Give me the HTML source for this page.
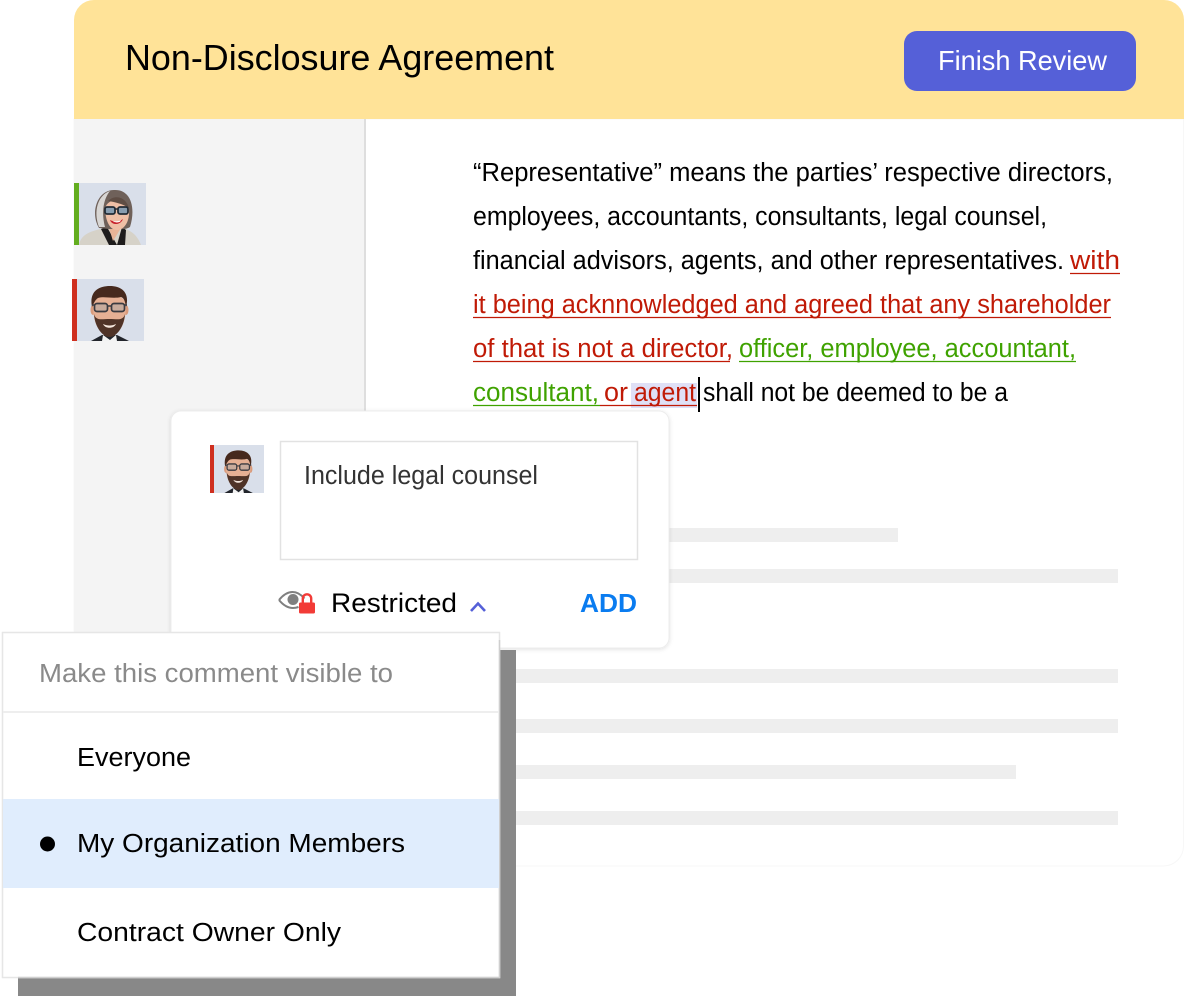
<!DOCTYPE html>
<html lang="en">
<head>
<meta charset="utf-8">
<title>Non-Disclosure Agreement</title>
<style>
html,body{margin:0;padding:0;width:1184px;height:997px;overflow:hidden;background:#fff}
svg{display:block}
text{font-family:"Liberation Sans",sans-serif;font-size:25.5px;fill:#000;white-space:pre}
</style>
</head>
<body>
<svg width="1184" height="997" viewBox="0 0 1184 997" xmlns="http://www.w3.org/2000/svg">
<defs>
<clipPath id="woman"><rect x="0" y="0" width="67" height="62"/></clipPath>
<clipPath id="man"><rect x="0" y="0" width="67" height="62"/></clipPath>
<g id="manFace" clip-path="url(#man)">
<rect width="67" height="62" fill="#d9dfea"/>
<path d="M14 62 L25 56 L40 56 L52 62Z" fill="#22252b"/>
<path d="M26 56 L33 61 L39 56 L40 62 L25 62Z" fill="#f2f2f2"/>
<ellipse cx="16" cy="31" rx="2.500" ry="5" fill="#d99b7c"/>
<ellipse cx="49" cy="31" rx="2.500" ry="5" fill="#d99b7c"/>
<path d="M16 26 C16 12 49 12 49 26 C49 46 42 56 32.500 56 C23 56 16 46 16 26Z" fill="#e6b094"/>
<path d="M17 35 C18 49 26 58 32.500 58 C39 58 47 49 48 35 C46 42 41 40 32.500 40 C24 40 19 42 17 35Z" fill="#4f3327"/>
<path d="M26 45 C30 47 35 47 39 45 C37 50 28 50 26 45Z" fill="#f4e6dc"/>
<path d="M15 28 C12 13 21 7 33 7 C45 7 53 14 49 28 C48 22 47 19 44 18 C36 20 27 17 21 19 C18 21 17 24 15 28Z" fill="#46291d"/>
<rect x="17.500" y="24.500" width="13" height="8" rx="2.500" fill="#b9a9a0" fill-opacity=".65" stroke="#3a3a40" stroke-width="1.700"/>
<rect x="34.500" y="24.500" width="13" height="8" rx="2.500" fill="#b9a9a0" fill-opacity=".65" stroke="#3a3a40" stroke-width="1.700"/>
<path d="M30.500 27H34.500M15 26H17.500M47.500 26H50" stroke="#3a3a40" stroke-width="1.500"/>
</g>
<g id="womanFace" clip-path="url(#woman)">
<rect width="67" height="62" fill="#d9dfea"/>
<path d="M0 62 C2 50 14 48 25 45 L44 45 C54 48 59 54 62 62Z" fill="#d6d2c8"/>
<path d="M28 44 L38 62 L30 62 L22 46Z M43 44 L38 62 L46 62 L47 47Z" fill="#1e1c1c"/>
<path d="M30 45 L34 58 L42 45Z" fill="#e8b497"/>
<path d="M20 45 C11 30 18 7 35 7 C52 6 57 25 51 44 C46 47 42 46 42 46 L30 46Z" fill="#6f615a"/>
<path d="M20 44 C14 28 19 12 31 8 C23 18 23 32 26 44Z" fill="#d8d6d4"/>
<path d="M26 27 C26 15 48 12 50 26 C51 39 45 47 38 47 C31 47 27 39 26 27Z" fill="#efbfa6"/>
<path d="M29 18 C36 11 47 14 50 25 C44 21 36 19 29 18Z" fill="#5f4d44"/>
<path d="M31 37 C35 39 40 39 44 36 C42 42 33 43 31 37Z" fill="#c8242d"/>
<path d="M33.500 37.800C36 38.500 39.500 38.400 42 37.300L41 38.800C38.500 39.800 35.500 39.800 33.500 37.800Z" fill="#fff"/>
<rect x="26" y="24" width="10" height="7" rx="2" fill="#5c8fb5" fill-opacity=".7" stroke="#232c36" stroke-width="1.800"/>
<rect x="39" y="24" width="10" height="7" rx="2" fill="#5c8fb5" fill-opacity=".7" stroke="#232c36" stroke-width="1.800"/>
<path d="M36 26H39" stroke="#232c36" stroke-width="1.500"/>
</g>
<filter id="cardShadow" x="-5%" y="-5%" width="110%" height="110%">
<feDropShadow dx="0" dy="1" stdDeviation="2" flood-color="#000" flood-opacity=".12"/>
</filter>
</defs>

<!-- document card -->
<path d="M74 119H1183.500V846A20 20 0 0 1 1163.500 866H74Z" fill="#fff" stroke="#f7f7f7" stroke-width="1"/>
<path d="M74 20A20 20 0 0 1 94 0H1164A20 20 0 0 1 1184 20V119H74Z" fill="#ffe398"/>
<rect x="74" y="119" width="291" height="530" fill="#f4f4f4"/>
<rect x="364" y="119" width="2" height="300" fill="#dedede"/>

<text x="125" y="70" style="font-size:36px" textLength="429" lengthAdjust="spacingAndGlyphs">Non-Disclosure Agreement</text>
<rect x="904" y="31" width="232" height="60" rx="13" fill="#5560d8"/>
<text x="938" y="70" style="font-size:28px;fill:#fff" textLength="169" lengthAdjust="spacingAndGlyphs">Finish Review</text>

<!-- avatars -->
<use href="#womanFace" x="79" y="183"/>
<rect x="74" y="183" width="5" height="62" fill="#63ad1f"/>
<use href="#manFace" x="77" y="279"/>
<rect x="72" y="279" width="5" height="62" fill="#cf2f1f"/>

<!-- document text -->
<text x="473" y="181" textLength="640" lengthAdjust="spacingAndGlyphs">“Representative” means the parties’ respective directors,</text>
<text x="473" y="225" textLength="574" lengthAdjust="spacingAndGlyphs">employees, accountants, consultants, legal counsel,</text>
<text x="473" y="269" textLength="591" lengthAdjust="spacingAndGlyphs">financial advisors, agents, and other representatives.</text>
<text x="1070" y="269" style="fill:#c01a06" textLength="50" lengthAdjust="spacingAndGlyphs">with</text>
<text x="473" y="313" style="fill:#c01a06" textLength="638" lengthAdjust="spacingAndGlyphs">it being acknnowledged and agreed that any shareholder</text>
<text x="473" y="357" style="fill:#c01a06" textLength="260" lengthAdjust="spacingAndGlyphs">of that is not a director,</text>
<text x="739" y="357" style="fill:#3fa200" textLength="337" lengthAdjust="spacingAndGlyphs">officer, employee, accountant,</text>
<text x="473" y="401" style="fill:#3fa200" textLength="126" lengthAdjust="spacingAndGlyphs">consultant,</text>
<rect x="631" y="383" width="66" height="25" fill="#dfe0f6"/>
<text x="604" y="401" style="fill:#c01a06" textLength="24" lengthAdjust="spacingAndGlyphs">or</text>
<text x="634" y="401" style="fill:#c01a06" textLength="62" lengthAdjust="spacingAndGlyphs">agent</text>
<text x="703" y="401" textLength="305" lengthAdjust="spacingAndGlyphs">shall not be deemed to be a</text>
<rect x="698" y="377" width="2" height="35" fill="#000"/>

<path d="M1070 273.500H1120M473 317.500H1111M473 361.500H730" stroke="#c01a06" stroke-width="1.300"/>
<path d="M739 361.500H1076M473 405.500H600" stroke="#3fa200" stroke-width="1.300"/>
<path d="M600 405.500H697" stroke="#c01a06" stroke-width="1.300"/>

<!-- placeholder lines -->
<g fill="#eeeeee">
<rect x="660" y="528" width="238" height="14"/>
<rect x="660" y="569" width="458" height="14"/>
<rect x="510" y="669" width="608" height="14"/>
<rect x="510" y="719" width="608" height="14"/>
<rect x="510" y="765" width="506" height="14"/>
<rect x="510" y="811" width="608" height="14"/>
</g>

<!-- comment card -->
<rect x="171" y="411" width="498" height="237" rx="10" fill="#fff" stroke="#ececec" filter="url(#cardShadow)"/>
<svg x="214" y="445" width="50" height="48" viewBox="0 0 67 62" preserveAspectRatio="none"><use href="#manFace"/></svg>
<rect x="210" y="445" width="4" height="48" fill="#cf2f1f"/>
<rect x="280.500" y="441.500" width="357" height="118" fill="#fff" stroke="#e2e2e2" stroke-width="1.500"/>
<text x="304" y="484" style="fill:#333" textLength="234" lengthAdjust="spacingAndGlyphs">Include legal counsel</text>

<!-- eye + lock icon -->
<path d="M279 600C283.500 594.500 288 592 292.500 592C297 592 301 594.500 304.500 598.500" fill="none" stroke="#808080" stroke-width="2"/>
<path d="M279 600C283.500 605.500 288 608 293 608C295 608 296.800 607.600 298.500 607" fill="none" stroke="#808080" stroke-width="2"/>
<circle cx="293" cy="599.500" r="5.500" fill="#808080"/>
<rect x="299" y="602.500" width="16" height="11" rx="1.500" fill="#f23b37"/>
<path d="M302.800 603.500V598.500A4.200 4.200 0 0 1 311.200 598.500V603.500" fill="none" stroke="#f23b37" stroke-width="2.400"/>
<text x="331" y="612" style="font-size:27px" textLength="126" lengthAdjust="spacingAndGlyphs">Restricted</text>
<path d="M471 611L478 603.500L485 611" fill="none" stroke="#5560d8" stroke-width="2.600"/>
<text x="580" y="612" style="font-size:26px;font-weight:bold;fill:#0a7cf0" textLength="57" lengthAdjust="spacingAndGlyphs">ADD</text>

<!-- dropdown -->
<rect x="18" y="650" width="498" height="346" fill="#888888"/>
<rect x="2.500" y="632.500" width="497" height="345" fill="#fff" stroke="#e6e6e6" stroke-width="1.500"/>
<path d="M499.500 640V977.500H18" fill="none" stroke="#cfcfcf" stroke-width="1.500"/>
<rect x="3" y="711" width="496" height="2" fill="#eeeeee"/>
<rect x="3" y="799" width="496" height="89" fill="#e0edfd"/>
<text x="39" y="682" style="fill:#8a8a8a" textLength="354" lengthAdjust="spacingAndGlyphs">Make this comment visible to</text>
<text x="77" y="766" textLength="114" lengthAdjust="spacingAndGlyphs">Everyone</text>
<circle cx="47.500" cy="844" r="7.500" fill="#000"/>
<text x="77" y="852" textLength="328" lengthAdjust="spacingAndGlyphs">My Organization Members</text>
<text x="77" y="941" textLength="264" lengthAdjust="spacingAndGlyphs">Contract Owner Only</text>
</svg>
</body>
</html>
